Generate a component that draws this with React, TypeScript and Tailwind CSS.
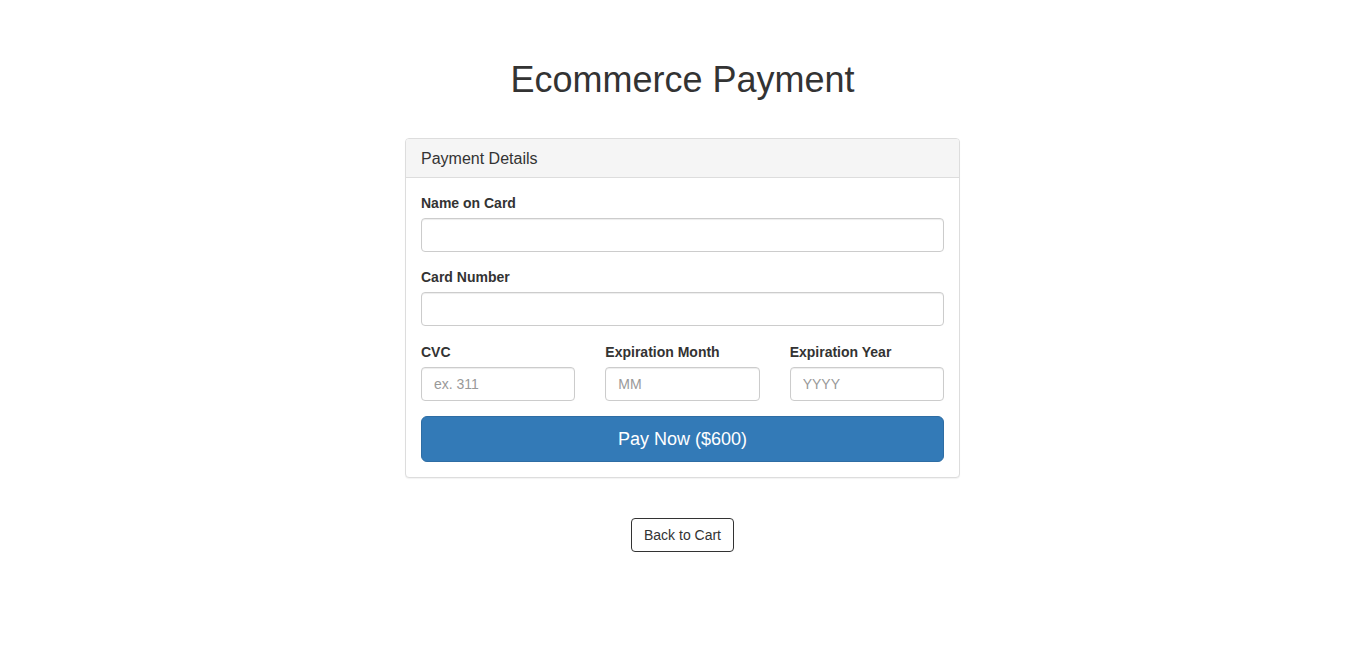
import React from 'react'

const font = { fontFamily: '"Liberation Sans", Arial, sans-serif' }

function Field({ label, placeholder }: { label: string; placeholder?: string }) {
  return (
    <div className="flex flex-col">
      <label className="mb-[5px] text-[14px] font-bold leading-[20px] text-[#333]">{label}</label>
      <input
        type="text"
        placeholder={placeholder}
        className="h-[34px] w-full rounded-[4px] border border-[#ccc] bg-white px-[12px] py-[6px] text-[14px] text-[#555] shadow-[inset_0_1px_1px_rgba(0,0,0,0.075)] outline-none placeholder:text-[#999]"
      />
    </div>
  )
}

export default function App() {
  return (
    <div className="min-h-screen bg-white pr-[7px] text-[#333]" style={font}>
      <div className="mx-auto flex w-[555px] flex-col pt-[60px]">
        <h1 className="mb-[38px] text-center text-[36px] font-normal leading-[1.1] text-[#333]">
          Ecommerce Payment
        </h1>

        {/* Payment panel */}
        <div className="rounded-[4px] border border-[#ddd] bg-white shadow-[0_1px_1px_rgba(0,0,0,0.05)]">
          <div className="rounded-t-[3px] border-b border-[#ddd] bg-[#f5f5f5] px-[15px] pt-[11px] pb-[10px]">
            <h3 className="text-[16px] leading-[1.1] text-[#333]">Payment Details</h3>
          </div>
          <div className="flex flex-col gap-[15px] p-[15px]">
            <Field label="Name on Card" />
            <Field label="Card Number" />
            <div className="mt-[1px] grid grid-cols-3 gap-[30px]">
              <Field label="CVC" placeholder="ex. 311" />
              <Field label="Expiration Month" placeholder="MM" />
              <Field label="Expiration Year" placeholder="YYYY" />
            </div>
            <button className="h-[46px] w-full rounded-[6px] border border-[#2e6da4] bg-[#337ab7] px-[16px] pt-[2px] text-[18px] leading-[1.3333] text-white">
              Pay Now ($600)
            </button>
          </div>
        </div>

        <div className="mt-[40px] flex justify-center">
          <button className="h-[34px] rounded-[4px] border border-[#333] bg-white px-[12px] text-[14px] leading-[20px] text-[#333]">
            Back to Cart
          </button>
        </div>
      </div>
    </div>
  )
}
